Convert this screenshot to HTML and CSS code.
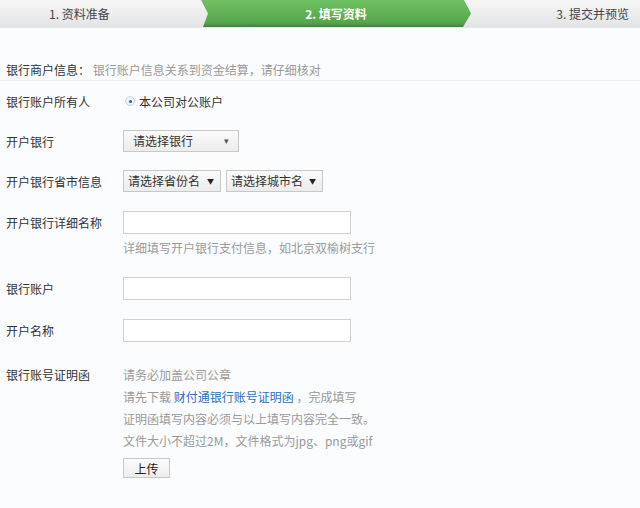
FILE: index.html
```html
<!DOCTYPE html>
<html lang="zh-CN">
<head>
  <meta charset="UTF-8" />
  <title>填写资料</title>
  <link rel="stylesheet" href="styles.css">
</head>
<body>

  <div class="steps">
    <div class="step step-first">1. 资料准备</div>
    <div class="step step-active">2. 填写资料</div>
    <div class="step step-last">3. 提交并预览</div>
  </div>

  <form class="form">
    <div class="intro">
      <span class="intro-title">银行商户信息：</span>
      <span class="muted">银行账户信息关系到资金结算，请仔细核对</span>
    </div>

    <div class="row row-owner">
      <label class="label">银行账户所有人</label>
      <div class="field">
        <span class="radio"><span class="radio-dot"></span></span>
        <span>本公司对公账户</span>
      </div>
    </div>

    <div class="row row-select">
      <label class="label">开户银行</label>
      <div class="field">
        <div class="select select-bank">请选择银行<span class="caret">&#9662;</span></div>
      </div>
    </div>

    <div class="row row-select">
      <label class="label">开户银行省市信息</label>
      <div class="field">
        <div class="select select-prov">请选择省份名<span class="caret-solid">&#9660;</span></div>
        <div class="select select-city">请选择城市名<span class="caret-solid">&#9660;</span></div>
      </div>
    </div>

    <div class="row row-input">
      <label class="label">开户银行详细名称</label>
      <div class="field"><input class="text" type="text" /></div>
    </div>
    <div class="hint">详细填写开户银行支付信息，如北京双榆树支行</div>

    <div class="row row-input">
      <label class="label">银行账户</label>
      <div class="field"><input class="text" type="text" /></div>
    </div>

    <div class="row row-input">
      <label class="label">开户名称</label>
      <div class="field"><input class="text" type="text" /></div>
    </div>

    <div class="row row-proof">
      <label class="label">银行账号证明函</label>
      <div class="field-col">
        <p class="muted">请务必加盖公司公章</p>
        <p class="muted">请先下载 <a class="link" href="#">财付通银行账号证明函</a> ，完成填写</p>
        <p class="muted">证明函填写内容必须与以上填写内容完全一致。</p>
        <p class="muted">文件大小不超过2M，文件格式为jpg、png或gif</p>
        <button class="upload" type="button">上传</button>
      </div>
    </div>
  </form>

</body>
</html>
```

FILE: styles.css
```css
body {
  margin: 0;
  padding: 0;
  font-family: "Noto Sans CJK SC", "Liberation Sans", sans-serif;
  font-size: 12px;
  color: #333;
  background-color: #fbfcfd;
}

/* step bar */
.steps {
  display: flex;
  height: 28px;
  background: linear-gradient(#f6f6f7, #e3e4e6);
  border-bottom: 1px solid #e6e7e9;
  box-sizing: border-box;
}

.step {
  line-height: 28px;
  color: #444;
  white-space: nowrap;
}

.step-first {
  width: 201px;
  padding-left: 49px;
  box-sizing: border-box;
}

.step-active {
  width: 270px;
  text-align: center;
  color: #fff;
  font-weight: bold;
  background: linear-gradient(#6fc162, #55a64b 85%, #3f8238);
  clip-path: polygon(0 0, calc(100% - 7px) 0, 100% 50%, calc(100% - 8px) 100%, 2px 100%, 7px 50%);
}

.step-last {
  flex: 1;
  text-align: right;
  padding-right: 11px;
}

/* form */
.form {
  padding-left: 6px;
}

.intro {
  margin-top: 32px;
  height: 20px;
  line-height: 20px;
  border-bottom: 1px solid #eceef1;
  margin-left: -6px;
  padding-left: 6px;
}

.intro-title {
  color: #333;
}

.muted {
  color: #9a9a9a;
}

.row {
  display: flex;
  align-items: center;
}

.label {
  width: 117px;
  flex-shrink: 0;
}

.field {
  display: flex;
  align-items: center;
  gap: 5px;
}

.row-owner {
  margin-top: 10px;
  height: 20px;
}

.row-owner .field {
  gap: 4px;
  padding-left: 2px;
}

.radio {
  width: 8px;
  height: 8px;
  border-radius: 50%;
  border: 1px solid #c9d4e2;
  background: #eef3f9;
  display: flex;
  align-items: center;
  justify-content: center;
}

.radio-dot {
  width: 3px;
  height: 3px;
  border-radius: 50%;
  background: #3a5a8c;
}

.row-select {
  margin-top: 18px;
  height: 22px;
}

.row-select:nth-of-type(3) {
  margin-top: 19px;
}

.select {
  height: 22px;
  line-height: 20px;
  box-sizing: border-box;
  border: 1px solid #c8c8c8;
  background: linear-gradient(#fafafa, #ececec);
  color: #333;
  position: relative;
  padding-left: 9px;
}

.select-bank {
  width: 116px;
}

.select-prov {
  width: 98px;
  padding-left: 4px;
}

.select-city {
  width: 97px;
  padding-left: 4px;
}

.caret {
  position: absolute;
  right: 9px;
  top: 0;
  font-size: 9px;
  color: #555;
}

.caret-solid {
  position: absolute;
  right: 6px;
  top: 0;
  font-size: 7px;
  color: #222;
}

.row-input {
  margin-top: 19px;
  height: 23px;
}

.text {
  width: 228px;
  height: 23px;
  box-sizing: border-box;
  border: 1px solid #d0d0d0;
  background: #fff;
  margin: 0;
  padding: 0 4px;
}

.hint {
  margin-top: 4px;
  margin-left: 117px;
  height: 20px;
  line-height: 20px;
  color: #9a9a9a;
}

.row-proof {
  margin-top: 22px;
  align-items: flex-start;
}

.row-proof .label {
  line-height: 22px;
}

.field-col p {
  margin: 0;
  line-height: 22px;
}

.link {
  color: #2f6fbd;
  text-decoration: none;
}

.upload {
  margin-top: 6px;
  width: 47px;
  height: 20px;
  padding: 0;
  font-family: inherit;
  font-size: 12px;
  color: #222;
  border: 1px solid #c8c8c8;
  background: linear-gradient(#fdfdfd, #ececec);
}
```
